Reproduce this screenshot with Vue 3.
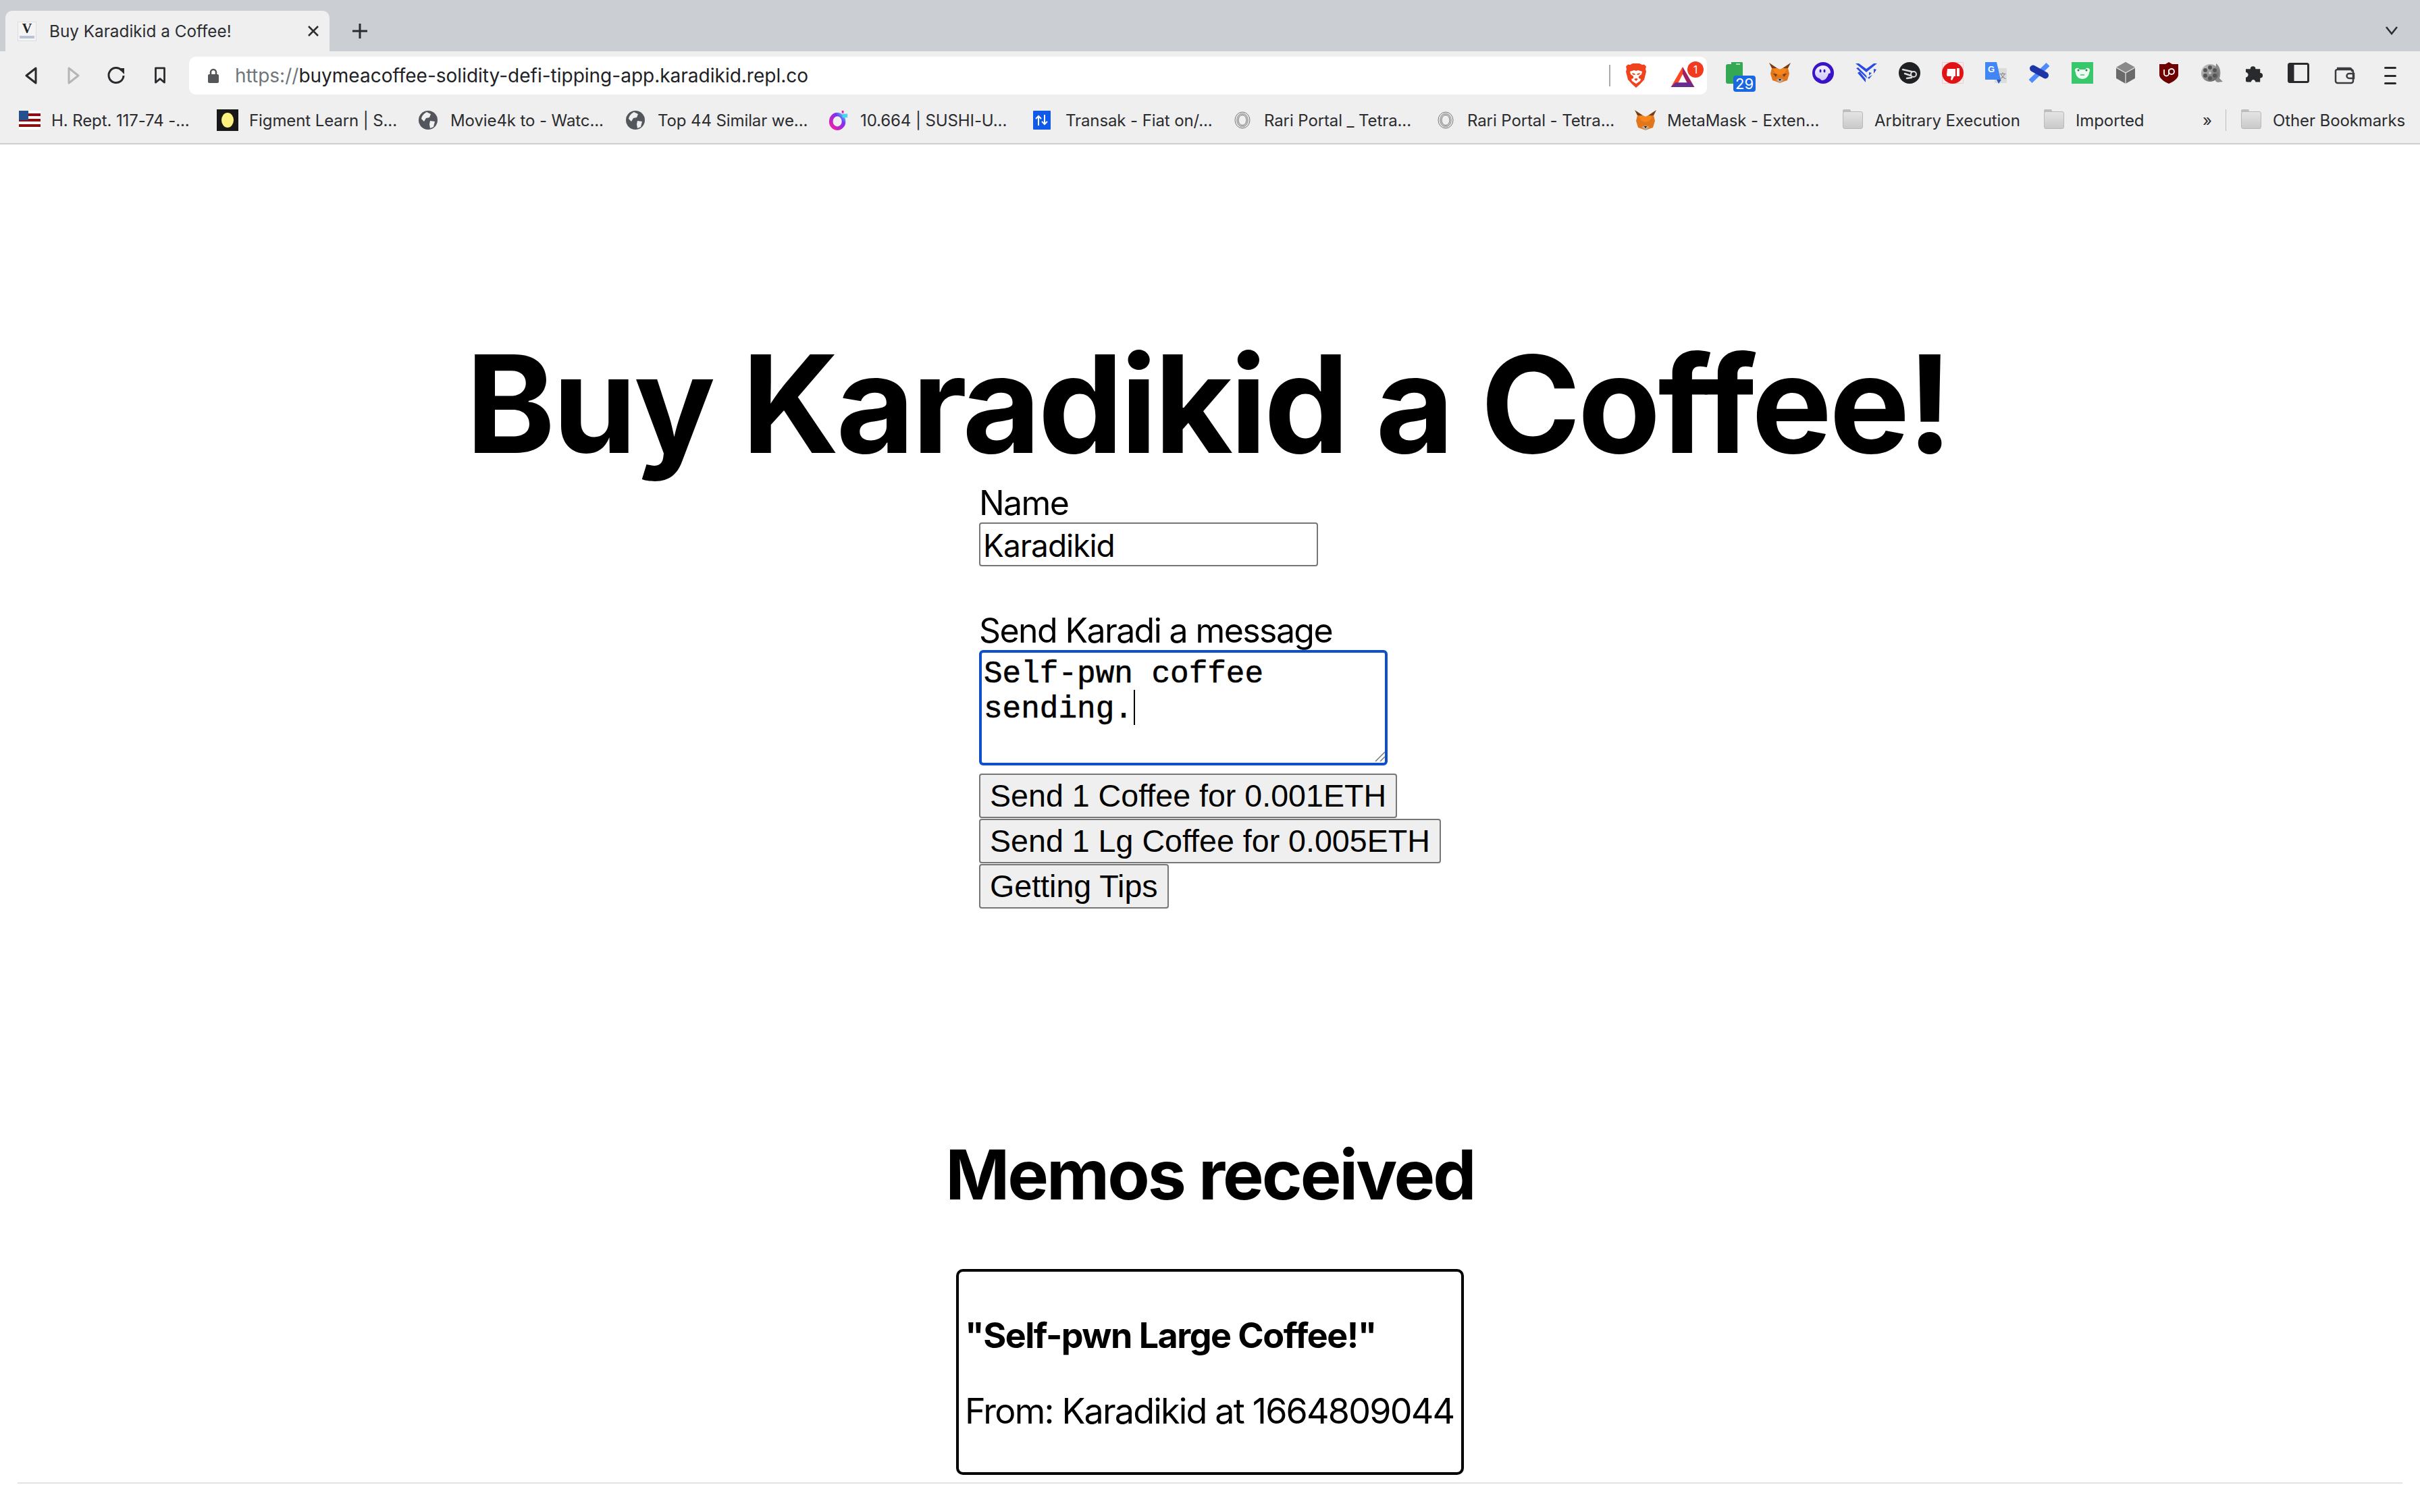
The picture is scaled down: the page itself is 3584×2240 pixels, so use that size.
<script setup>
const bookmarks = [
  { icon: 'flag', label: 'H. Rept. 117-74 -...', w: 209 },
  { icon: 'figment', label: 'Figment Learn | S...', w: 214 },
  { icon: 'globe', label: 'Movie4k to - Watc...', w: 223 },
  { icon: 'globe', label: 'Top 44 Similar we...', w: 216 },
  { icon: 'sushi', label: '10.664 | SUSHI-U...', w: 220 },
  { icon: 'transak', label: 'Transak - Fiat on/...', w: 210 },
  { icon: 'rari', label: 'Rari Portal _ Tetra...', w: 217 },
  { icon: 'rari', label: 'Rari Portal - Tetra...', w: 212 },
  { icon: 'fox', label: 'MetaMask - Exten...', w: 223 },
  { icon: 'folder', label: 'Arbitrary Execution', w: 214 },
  { icon: 'folder', label: 'Imported', w: 100 }
]
</script>

<template>
  <div class="window">
    <div class="tabstrip">
      <div class="tab">
        <span class="favicon"><b>V</b><i></i></span>
        <span class="tab-title">Buy Karadikid a Coffee!</span>
        <svg class="tab-close" viewBox="0 0 18 16"><path d="M2 1l14 14M16 1L2 15" /></svg>
      </div>
      <svg class="new-tab" viewBox="0 0 24 24"><path d="M12 1v22M1 12h22" /></svg>
      <svg class="tab-menu" viewBox="0 0 20 14"><path d="M2 2l8 10 8-10" /></svg>
    </div>

    <div class="toolbar">
      <div class="nav">
        <svg class="nav-icon" viewBox="0 0 20 26"><path d="M17 2v22L3 13z" /></svg>
        <svg class="nav-icon off" viewBox="0 0 20 26"><path d="M3 2v22l14-11z" /></svg>
        <svg class="nav-icon reload" viewBox="0 0 28 28"><path d="M22 6a11 11 0 1 0 3 8" /><path class="fill" d="M17 3h9v9z" /></svg>
        <svg class="nav-icon mark" viewBox="0 0 20 28"><path d="M3 2h14v23l-7-6-7 6z" /></svg>
      </div>
      <div class="omnibox">
        <svg class="lock" viewBox="0 0 16 22"><path class="shackle" d="M4 10V6a4 4 0 0 1 8 0v4" /><rect y="9" width="16" height="13" rx="2" /></svg>
        <span class="url"><span class="scheme">https://</span>buymeacoffee-solidity-defi-tipping-app.karadikid.repl.co</span>
        <span class="omni-sep"></span>
        <span class="omni-icon">
          <svg class="i-brave" viewBox="0 0 32 36">
            <path fill="#f0421c" d="M7 2l4-2h10l4 2 3-.5 3 3-1 4 1 3.500-3 12-6 6.500-6 5.500-6-5.500-6-6.500-3-12 1-3.500-1-4 3-3z" />
            <path fill="#fff" d="M7 12l6-2 3 1 3-1 6 2-1 4-4 3v3l3 1-1 3-6 4-6-4-1-3 3-1v-3l-4-3z" />
            <path fill="#f0421c" d="M10 14l4 1 1 2-4-.5zM22 14l-4 1-1 2 4-.5zM13 23l3-1 3 1-3 3z" />
          </svg>
        </span>
        <span class="omni-icon bat">
          <svg class="i-bat" viewBox="0 0 36 32">
            <path fill="#ff4724" d="M18 0L0 31h8l10-20z" />
            <path fill="#9e1f63" d="M18 0l18 31h-8L18 11z" />
            <path fill="#662d91" d="M0 31h36l-7-7H7z" />
          </svg>
          <span class="bat-badge">1</span>
        </span>
      </div>
      <div class="extensions">
        <span class="ext calendar">
          <svg viewBox="0 0 30 32"><path fill="#34a853" d="M3 3h5V0h14a2 2 0 0 1 3 2v30H3a3 3 0 0 1-3-3V6a3 3 0 0 1 3-3z" /><rect x="15" y="2" width="6" height="2" fill="#fff" opacity=".6" /></svg>
          <span class="cal-badge">29</span>
        </span>
        <span class="ext">
          <svg viewBox="0 0 32 30">
            <path fill="#763d16" d="M0 0l12 8H4zM32 0L20 8h8z" />
            <path fill="#e2761b" d="M4 8h8l4 2 4-2h8l2 8-3 10-6 2-5 2-5-2-6-2-3-10z" />
            <path fill="#f6851b" d="M12 8l4 2v8l-6-2-4-6zM20 8l-4 2v8l6-2 4-6z" />
            <path fill="#c0ad9e" d="M10 25l6 5 6-5-6-2z" />
            <path fill="#161616" d="M14 24h4l-2 3z" />
            <path fill="#763d16" d="M6 16l6 1-2 4zM26 16l-6 1 2 4z" />
          </svg>
        </span>
        <span class="ext">
          <svg viewBox="0 0 32 32">
            <defs><linearGradient id="ph" x1="0" y1="0" x2="0" y2="1"><stop offset="0" stop-color="#f4f2ff" /><stop offset="1" stop-color="#cfc8f8" /></linearGradient></defs>
            <circle cx="16" cy="16" r="16" fill="#3a13c9" />
            <path fill="url(#ph)" d="M4 16c0-6 5-11 12-11 6 0 11 5 11 10 0 1-1 2-3 2-1 5-5 10-9 10-3 0-2-2-5-3-3-1-6-4-6-8z" />
            <ellipse cx="12" cy="13" rx="1.500" ry="2.500" fill="#3a13c9" /><ellipse cx="18" cy="13" rx="1.500" ry="2.500" fill="#3a13c9" />
          </svg>
        </span>
        <span class="ext">
          <svg viewBox="0 0 32 28" fill="#2b4ae2">
            <path d="M0 0h5l11 8L27 0h5L16 13zM1 7l3-1 12 12 1 4zM3 14l3-2 9 11v5zM20 13l4 1-4 4zM27 8l4 1-4 6zM25 17l-5 6-2-2z" />
          </svg>
        </span>
        <span class="ext">
          <svg viewBox="0 0 32 32">
            <circle cx="16" cy="16" r="16" fill="#202124" />
            <circle cx="22" cy="18" r="4" fill="none" stroke="#ddd" stroke-width="2" />
            <path d="M6 11l13 3M9 17l9 3M12 24l7-1" stroke="#ddd" stroke-width="2.500" stroke-linecap="round" />
          </svg>
        </span>
        <span class="ext">
          <svg viewBox="0 0 32 32">
            <rect x=".5" y=".5" width="31" height="31" fill="none" stroke="#f5c9c9" />
            <circle cx="16" cy="16" r="16" fill="#e01414" />
            <path fill="#fff" d="M8 10h12v11h-2l-3 6-2-1 1-5H8l-1-2zM22 9h4v12h-4z" />
          </svg>
        </span>
        <span class="ext">
          <svg viewBox="0 0 32 32">
            <rect x="14" y="9" width="18" height="22" rx="1" fill="#dcdcdc" />
            <path fill="#4285f4" d="M0 0h17l6 26H0z" />
            <path fill="#2a56c6" d="M17 26h7l-4 6z" />
            <text x="4" y="15" class="g">G</text>
            <text x="21" y="24" class="zh">文</text>
          </svg>
        </span>
        <span class="ext">
          <svg viewBox="0 0 32 29">
            <path d="M3 27L29 2" stroke="#4f8bff" stroke-width="7" fill="none" />
            <path d="M7 8l18 10" stroke="#1e35a8" stroke-width="10" stroke-linecap="round" fill="none" />
          </svg>
        </span>
        <span class="ext">
          <svg viewBox="0 0 32 32">
            <rect width="32" height="32" fill="#39c76c" />
            <path fill="#eefbf2" d="M5 12c0-2 2-4 5-3l2 2h8l2-2c3-1 5 1 5 3 0 1 0 2-1 3 0 6-5 10-10 10S6 21 6 15c-1-1-1-2-1-3z" />
            <circle cx="10" cy="12" r="1.500" fill="#2c7a4b" /><circle cx="22" cy="12" r="1.500" fill="#2c7a4b" />
            <path d="M13 19h6" stroke="#39c76c" stroke-width="1.500" />
          </svg>
        </span>
        <span class="ext">
          <svg class="i-cube" viewBox="0 0 28 32">
            <path fill="#6a6a6a" d="M14 0l14 8v16l-14 8L0 24V8z" />
            <path fill="#8a8a8a" d="M14 0l14 8-14 8L0 8z" />
            <path d="M14 16v16M14 16L0 8M14 16l14-8" stroke="#e8e8e8" stroke-width="1.200" fill="none" />
          </svg>
        </span>
        <span class="ext">
          <svg class="i-ublock" viewBox="0 0 28 32">
            <path fill="#6e0000" d="M14 0l5 3h9v16c0 5-7 10-14 13C7 29 0 24 0 19V3h9z" />
            <path d="M7 11v6a3.500 3.500 0 0 0 7 0v-6" fill="none" stroke="#fff" stroke-width="1.800" />
            <circle cx="18" cy="14" r="4" fill="none" stroke="#fff" stroke-width="1.800" />
          </svg>
        </span>
        <span class="ext">
          <svg viewBox="0 0 32 32">
            <defs><linearGradient id="fm" x1="0" y1="0" x2="1" y2="1"><stop offset="0" stop-color="#cfcfcf" /><stop offset="1" stop-color="#555" /></linearGradient></defs>
            <path d="M22 2c6 4 8 14 5 22l5 5-8 1-3-2z" fill="#8a8a8a" />
            <circle cx="13" cy="16" r="13" fill="url(#fm)" />
            <circle cx="13" cy="16" r="2" fill="#ccc" />
            <g fill="#555"><circle cx="13" cy="8" r="3" /><circle cx="13" cy="24" r="3" /><circle cx="6" cy="12" r="3" /><circle cx="20" cy="12" r="3" /><circle cx="6" cy="20" r="3" /><circle cx="20" cy="20" r="3" /></g>
          </svg>
        </span>
        <span class="ext">
          <svg class="i-puzzle" viewBox="0 0 29 28">
            <path fill="#292a2d" d="M0 8h7a4 4 0 1 1 8 0h7v6a4 4 0 1 1 0 8v6h-7c-1-5-6-5-7 0H2a2 2 0 0 1-2-2v-5c5-1 5-7 0-8z" />
          </svg>
        </span>
        <span class="ext">
          <svg viewBox="0 0 32 30">
            <rect x="1.500" y="1.500" width="29" height="27" rx="2" fill="none" stroke="#292a2d" stroke-width="3" />
            <rect x="1.500" y="1.500" width="8" height="27" fill="#292a2d" />
          </svg>
        </span>
      </div>
      <svg class="wallet" viewBox="0 0 31 26">
        <path d="M4 2h19a3 3 0 0 1 3 3v2M2 6a3 3 0 0 1 3-2h20a3 3 0 0 1 3 3v14a3 3 0 0 1-3 3H5a3 3 0 0 1-3-3z" />
        <path d="M29 10h-7a3 3 0 0 0 0 7h7z" />
      </svg>
      <div class="menu"><i></i><i></i><i></i></div>
    </div>

    <div class="bookmarks">
      <div v-for="b in bookmarks" :key="b.label" class="bm">
        <span class="bm-icon">
          <svg v-if="b.icon === 'flag'" class="flag" viewBox="0 0 32 28">
            <rect width="32" height="28" fill="#fff" />
            <g fill="#8b0f14"><rect y="4" width="32" height="4" /><rect y="12" width="32" height="4" /><rect y="20" width="32" height="4" /></g>
            <rect width="14" height="14" fill="#24508c" />
          </svg>
          <svg v-else-if="b.icon === 'figment'" viewBox="0 0 32 32"><rect width="32" height="32" fill="#181818" /><ellipse cx="16" cy="16" rx="9" ry="11" fill="#fff17f" /></svg>
          <svg v-else-if="b.icon === 'globe'" class="globe" viewBox="0 0 28 28">
            <circle cx="14" cy="14" r="14" fill="#53565c" />
            <path fill="#f0f0f1" d="M12 2l6 3-2 5-5 1-3 5-4-4c1-5 4-8 8-10zM17 15l7 1-2 8-5 2-1-6z" />
          </svg>
          <svg v-else-if="b.icon === 'sushi'" viewBox="0 0 34 30">
            <defs><linearGradient id="su" x1="0" y1="1" x2="1" y2="0"><stop offset="0" stop-color="#f61fa0" /><stop offset=".7" stop-color="#7b2ff7" /><stop offset="1" stop-color="#45d6f0" /></linearGradient></defs>
            <ellipse cx="15" cy="17" rx="10" ry="11" fill="none" stroke="url(#su)" stroke-width="6" />
            <rect x="22" y="0" width="3" height="4" fill="#e91e9c" /><rect x="23" y="5" width="8" height="6" fill="#4ad4ee" />
          </svg>
          <svg v-else-if="b.icon === 'transak'" class="transak" viewBox="0 0 26 28">
            <rect width="26" height="28" rx="1" fill="#0f5be8" />
            <path d="M8 22V8M4 12l4-4 4 4M17 6v14M13 16l4 4 4-4" fill="none" stroke="#fff" stroke-width="2" />
          </svg>
          <svg v-else-if="b.icon === 'rari'" class="rari" viewBox="0 0 24 26">
            <g fill="none" stroke="#777"><ellipse cx="12" cy="13" rx="11" ry="12" /><ellipse cx="12" cy="13" rx="8" ry="9.500" stroke="#aaa" stroke-width="2" /><ellipse cx="12" cy="13" rx="6" ry="7.500" /></g>
          </svg>
          <svg v-else-if="b.icon === 'fox'" viewBox="0 0 32 30">
            <path fill="#763d16" d="M0 0l12 8H4zM32 0L20 8h8z" />
            <path fill="#e2761b" d="M4 8h8l4 2 4-2h8l2 8-3 10-6 2-5 2-5-2-6-2-3-10z" />
            <path fill="#f6851b" d="M12 8l4 2v8l-6-2-4-6zM20 8l-4 2v8l6-2 4-6z" />
            <path fill="#c0ad9e" d="M10 25l6 5 6-5-6-2z" />
            <path fill="#161616" d="M14 24h4l-2 3z" />
          </svg>
          <span v-else class="folder"></span>
        </span>
        <span class="bm-text" :style="{ width: b.w + 'px' }">{{ b.label }}</span>
      </div>
      <span class="chevrons">»</span>
      <span class="bm-sep"></span>
      <div class="bm other">
        <span class="bm-icon"><span class="folder"></span></span>
        <span class="bm-text">Other Bookmarks</span>
      </div>
    </div>

    <main class="page">
      <h1 class="title">Buy Karadikid a Coffee!</h1>
      <form class="form" @submit.prevent>
        <label class="label">Name</label>
        <input class="name" type="text" value="Karadikid" />
        <label class="label second">Send Karadi a message</label>
        <div class="area-wrap">
          <textarea class="message" spellcheck="false">Self-pwn coffee sending.</textarea>
          <span class="caret"></span>
          <svg class="grip" viewBox="0 0 16 16"><path d="M15 1L1 15M15 8l-7 7" /></svg>
        </div>
        <button class="btn first" type="button">Send 1 Coffee for 0.001ETH</button>
        <button class="btn" type="button">Send 1 Lg Coffee for 0.005ETH</button>
        <button class="btn" type="button">Getting Tips</button>
      </form>
      <h2 class="memos">Memos received</h2>
      <div class="memo">
        <p class="memo-msg">"Self-pwn Large Coffee!"</p>
        <p class="memo-from">From: Karadikid at 1664809044</p>
      </div>
      <footer class="foot"></footer>
    </main>
  </div>
</template>

<style>
html, body { margin: 0; background: #fff; }
</style>

<style scoped>
.window { width: 3584px; height: 2240px; overflow: hidden; display: flex; flex-direction: column; font-family: "Inter", sans-serif; color: #000; }

.tabstrip { height: 76px; background: #cbced3; display: flex; align-items: flex-end; padding-left: 8px; box-sizing: border-box; flex: none; }
.tab { width: 480px; height: 60px; background: #efeff0; border-radius: 10px 10px 0 0; display: flex; align-items: center; padding-left: 18px; box-sizing: border-box; }
.favicon { width: 28px; height: 29px; background: #f4f4f4; border: 1px solid #ddd; box-sizing: border-box; display: flex; flex-direction: column; align-items: center; flex: none; }
.favicon b { font: bold 20px/19px "Liberation Serif", serif; color: #222; }
.favicon i { width: 22px; height: 4px; background: #b9c3d6; margin-top: 1px; }
.tab-title { font-size: 24.3px; color: #2b2c2f; margin-left: 19px; width: 382px; white-space: nowrap; }
.tab-close { width: 18px; height: 16px; flex: none; }
.tab-close path { fill: none; stroke: #2b2c2f; stroke-width: 2.5; }
.new-tab { width: 26px; height: 24px; margin: 0 0 18px 32px; flex: none; }
.new-tab path { fill: none; stroke: #2b2c2f; stroke-width: 3; }
.tab-menu { width: 20px; height: 14px; margin: 0 32px 24px auto; flex: none; }
.tab-menu path { fill: none; stroke: #2b2c2f; stroke-width: 2.5; }

.toolbar { height: 64px; background: #efeff0; display: flex; align-items: flex-end; flex: none; }
.nav { width: 280px; height: 56px; display: flex; align-items: center; flex: none; padding-left: 36px; box-sizing: border-box; gap: 42px; }
.nav-icon { width: 20px; height: 26px; fill: none; stroke: #292a2d; stroke-width: 3; stroke-linejoin: round; flex: none; }
.nav-icon.off { stroke: #b4b5b7; margin-left: 1px; }
.nav-icon.reload { width: 28px; height: 28px; margin-left: -3px; }
.nav-icon .fill { fill: #292a2d; stroke: none; }
.nav-icon.mark { margin-left: -1px; }
.omnibox { width: 2248px; height: 56px; background: #fff; border-radius: 10px; display: flex; align-items: center; flex: none; padding-left: 28px; box-sizing: border-box; }
.lock { width: 16px; height: 22px; fill: #55565a; flex: none; }
.lock .shackle { fill: none; stroke: #55565a; stroke-width: 2.5; }
.url { font-size: 28px; color: #202124; margin-left: 24px; flex: 1; min-width: 0; white-space: nowrap; }
.scheme { color: #70757a; }
.omni-sep { width: 2px; height: 32px; background: #ababab; flex: none; }
.omni-icon { width: 32px; height: 36px; margin-left: 22px; display: block; flex: none; position: relative; }
.omni-icon svg { display: block; width: 32px; height: 36px; }
.omni-icon.bat { margin-left: 35px; margin-right: 18px; width: 36px; height: 31px; margin-top: 4px; }
.omni-icon .i-bat { width: 36px; height: 31px; }
.bat-badge { position: absolute; left: 25px; top: -8px; width: 24px; height: 24px; border-radius: 50%; background: #f23b1e; color: #fff; font-size: 16px; display: flex; align-items: center; justify-content: center; }
.g { font: bold 13px "Liberation Sans", sans-serif; fill: #fff; }
.zh { font: 10px "Noto Sans CJK SC", sans-serif; fill: #777; }

.extensions { display: flex; align-items: center; height: 64px; flex: none; margin-left: 12px; align-self: flex-end; }
.ext { width: 64px; height: 32px; display: flex; justify-content: center; position: relative; flex: none; }
.ext svg { width: 32px; height: 32px; display: block; }
.ext .i-cube, .ext .i-ublock, .ext .i-puzzle { width: 28px; }
.calendar svg { width: 30px; margin-right: 3px; }
.cal-badge { position: absolute; left: 27px; top: 20px; width: 33px; height: 24px; border-radius: 4px; background: #1a67e2; color: #fff; font-size: 22px; line-height: 24px; text-align: center; }
.wallet { width: 31px; height: 26px; fill: none; stroke: #3a3b3e; stroke-width: 2.5; margin: 0 0 15px 21px; flex: none; }
.menu { width: 18px; height: 26px; margin: 0 0 15px 43px; display: flex; flex-direction: column; justify-content: space-between; flex: none; }
.menu i { display: block; height: 3px; background: #292a2d; border-radius: 2px; }

.bookmarks { height: 74px; box-sizing: border-box; background: #efeff0; border-bottom: 2px solid #cbced3; display: flex; align-items: center; padding: 4px 0 0 28px; gap: 36px; flex: none; }
.bm { display: flex; align-items: center; flex: none; gap: 16px; }
.bm-icon { width: 32px; height: 32px; display: flex; align-items: center; justify-content: flex-start; flex: none; }
.bm-icon svg { width: 32px; height: 32px; display: block; }
.bm-icon .flag { height: 28px; }
.bm-icon .globe { width: 28px; height: 28px; margin-left: 1px; }
.bm-icon .transak { width: 26px; height: 28px; }
.bm-icon .rari { width: 24px; height: 26px; margin-left: 4px; }
.bm-text { display: block; font-size: 24px; letter-spacing: -.1px; line-height: 30px; padding-top: 2px; color: #2b2c2f; white-space: nowrap; }
.folder { display: block; width: 30px; height: 26px; margin-left: 1px; background: linear-gradient(#e4e4e4, #c9c9c9); border: 1px solid #b8b8b8; border-radius: 3px; box-sizing: border-box; position: relative; }
.folder::before { content: ""; position: absolute; left: -1px; top: -4px; width: 12px; height: 4px; background: #bdbdbd; border-radius: 2px 2px 0 0; }
.chevrons { font-size: 24px; color: #2b2c2f; margin-left: 52px; }
.bm-sep { width: 1px; height: 32px; background: #bcbcbc; margin-left: -16px; }
.other { margin-left: -15px; }

.page { flex: 1; display: flex; flex-direction: column; align-items: center; }
.title { font-size: 200px; font-weight: 700; letter-spacing: -4px; line-height: 1; margin: 284px 6px 0 0; white-space: nowrap; }
.form { width: 684px; display: flex; flex-direction: column; align-items: flex-start; margin-top: 18px; }
.label { font-size: 50px; letter-spacing: -1.6px; line-height: 58px; }
.second { margin-top: 66px; }
.name { width: 502px; height: 65px; box-sizing: border-box; border: 2px solid #767676; border-radius: 4px; padding: 2px 4px 0; font: 46px "Inter", sans-serif; letter-spacing: -1px; color: #000; background: #fff; outline: none; }
.area-wrap { position: relative; width: 605px; height: 171px; }
.message { display: block; width: 605px; height: 171px; box-sizing: border-box; border: 4px solid #0f4fc9; border-radius: 6px; padding: 6px 4px 4px 3px; font: 46px/52px "Liberation Mono", monospace; -webkit-text-stroke: .6px #000; color: #000; outline: none; resize: none; }
.caret { position: absolute; left: 229px; top: 59px; width: 2px; height: 52px; background: #000; }
.grip { position: absolute; right: 3px; bottom: 5px; width: 16px; height: 16px; fill: none; stroke: #777; stroke-width: 1.5; }
.btn { height: 66px; box-sizing: border-box; border: 2px solid #767676; border-radius: 4px; background: #efefef; padding: 0 14px; font: 46.6px "Liberation Sans", sans-serif; color: #000; margin-top: 1px; white-space: nowrap; }
.btn.first { margin-top: 12px; }
.memos { font-size: 102px; font-weight: 700; letter-spacing: -3px; line-height: 1; margin: 343px 0 0; white-space: nowrap; }
.memo { width: 752px; height: 305px; box-sizing: border-box; border: 4px solid #000; border-radius: 10px; padding: 0 9px; margin-top: 89px; }
.memo-msg { font-size: 52px; font-weight: 700; letter-spacing: -1.5px; margin: 64px 0 0; line-height: 62px; white-space: nowrap; }
.memo-from { font-size: 52px; letter-spacing: -1.8px; margin: 50px 0 0; line-height: 62px; white-space: nowrap; }
.foot { width: 3532px; height: 2px; background: #e3e3e3; margin-top: 11px; flex: none; }
</style>
